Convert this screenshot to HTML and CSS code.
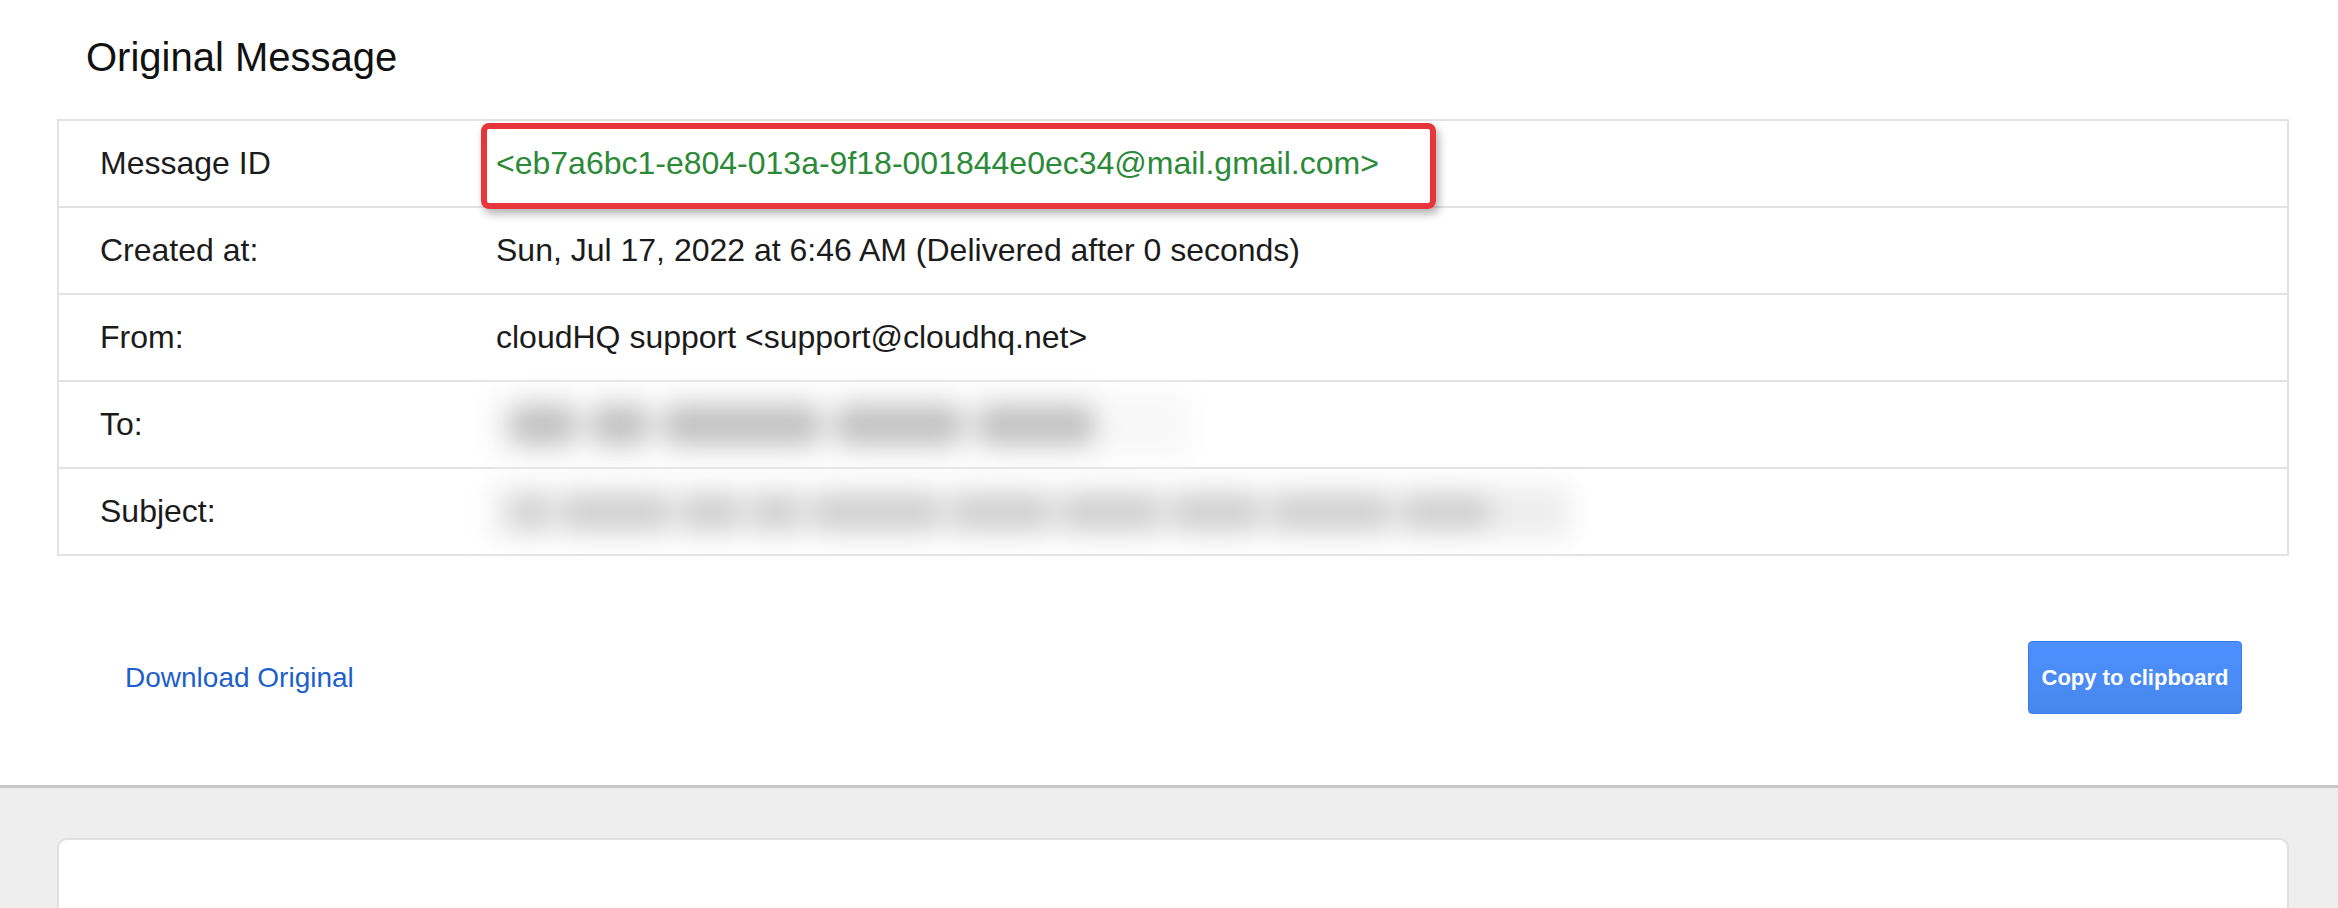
FILE: index.html
```html
<!DOCTYPE html>
<html lang="en">
<head>
<meta charset="utf-8">
<title>Original Message</title>
<link rel="stylesheet" href="styles.css">
</head>
<body>
<div class="page">
  <section class="top">
    <h1 class="title">Original Message</h1>
    <div class="table">
      <div class="row">
        <div class="label">Message ID</div>
        <div class="value id">&lt;eb7a6bc1-e804-013a-9f18-001844e0ec34@mail.gmail.com&gt;</div>
        <span class="highlight"></span>
      </div>
      <div class="row">
        <div class="label">Created at:</div>
        <div class="value">Sun, Jul 17, 2022 at 6:46 AM (Delivered after 0 seconds)</div>
      </div>
      <div class="row">
        <div class="label">From:</div>
        <div class="value">cloudHQ support &lt;support@cloudhq.net&gt;</div>
      </div>
      <div class="row">
        <div class="label">To:</div>
        <div class="value">
          <div class="blur blur-to">
            <span class="blob w70"></span><span class="blob w60"></span><span class="blob w160"></span><span class="blob w130"></span><span class="blob w120"></span>
          </div>
        </div>
      </div>
      <div class="row">
        <div class="label">Subject:</div>
        <div class="value">
          <div class="blur blur-subject">
            <span class="blob w40"></span><span class="blob w110"></span><span class="blob w60"></span><span class="blob w50"></span><span class="blob w130"></span><span class="blob w100"></span><span class="blob w100"></span><span class="blob w90"></span><span class="blob w120"></span><span class="blob w90"></span>
          </div>
        </div>
      </div>
    </div>
    <div class="actions">
      <a class="download" href="#">Download Original</a>
      <button class="copy" type="button">Copy to clipboard</button>
    </div>
  </section>
  <section class="bottom">
    <div class="card"></div>
  </section>
</div>
</body>
</html>
```
FILE: styles.css
```css
* { box-sizing: border-box; }
html, body { margin: 0; padding: 0; }
body {
  font-family: "Liberation Sans", Arial, Helvetica, sans-serif;
  color: #1b1b1b;
  background: #eeeeee;
  height: 908px;
  overflow: hidden;
}
.page { display: flex; flex-direction: column; }
.top {
  background: #ffffff;
  height: 788px;
  border-bottom: 3px solid #c7c7c7;
}
.title {
  margin: 0;
  padding: 34px 0 0 86px;
  font-size: 40px;
  line-height: 46px;
  font-weight: normal;
  color: #111;
}
.table {
  margin: 39px 49px 0 57px;
  border: 2px solid #e2e2e2;
}
.row {
  position: relative;
  display: flex;
  align-items: center;
  height: 87px;
  border-bottom: 2px solid #e2e2e2;
  font-size: 32px;
}
.row:last-child { height: 85px; border-bottom: none; }
.label {
  width: 437px;
  padding-left: 41px;
  flex: none;
}
.value { flex: 1; }
.value.id { color: #2b8a37; }
.highlight {
  position: absolute;
  left: 422px;
  top: 2px;
  width: 955px;
  height: 86px;
  border: 6px solid #e6353b;
  border-radius: 8px;
  box-shadow: 3px 5px 8px rgba(0, 0, 0, 0.3);
  pointer-events: none;
}
.blur {
  display: flex;
  align-items: center;
  overflow: hidden;
  filter: blur(13px);
  padding: 0 18px;
}
.blur-to {
  width: 700px;
  height: 68px;
  margin-left: -6px;
  gap: 12px;
  background: #f8f8f8;
}
.blur-subject {
  width: 1076px;
  height: 52px;
  margin-left: -3px;
  background: #ededed;
  gap: 10px;
}
.blob {
  display: block;
  height: 40px;
  background: #c2c2c2;
  border-radius: 18px;
  flex: none;
}
.blur-subject .blob { background: #d0d0d0; height: 34px; }
.w40 { width: 40px; }
.w50 { width: 50px; }
.w60 { width: 60px; }
.w70 { width: 70px; }
.w90 { width: 90px; }
.w100 { width: 100px; }
.w110 { width: 110px; }
.w120 { width: 120px; }
.w130 { width: 130px; }
.w160 { width: 160px; }
.actions {
  display: flex;
  align-items: center;
  justify-content: space-between;
  padding: 85px 96px 0 125px;
}
.download {
  font-size: 28px;
  color: #1d5fcb;
  text-decoration: none;
}
.copy {
  width: 214px;
  height: 73px;
  font-family: "Liberation Sans", Arial, sans-serif;
  font-weight: bold;
  font-size: 22px;
  color: #ffffff;
  background: linear-gradient(#4d90fe, #4787ed);
  border: 1px solid #3b7be9;
  border-radius: 4px;
  padding: 0;
}
.bottom {
  padding: 50px 49px 0 57px;
}
.card {
  height: 70px;
  background: #ffffff;
  border: 2px solid #e0e0e0;
  border-bottom: none;
  border-radius: 10px 10px 0 0;
}
```
